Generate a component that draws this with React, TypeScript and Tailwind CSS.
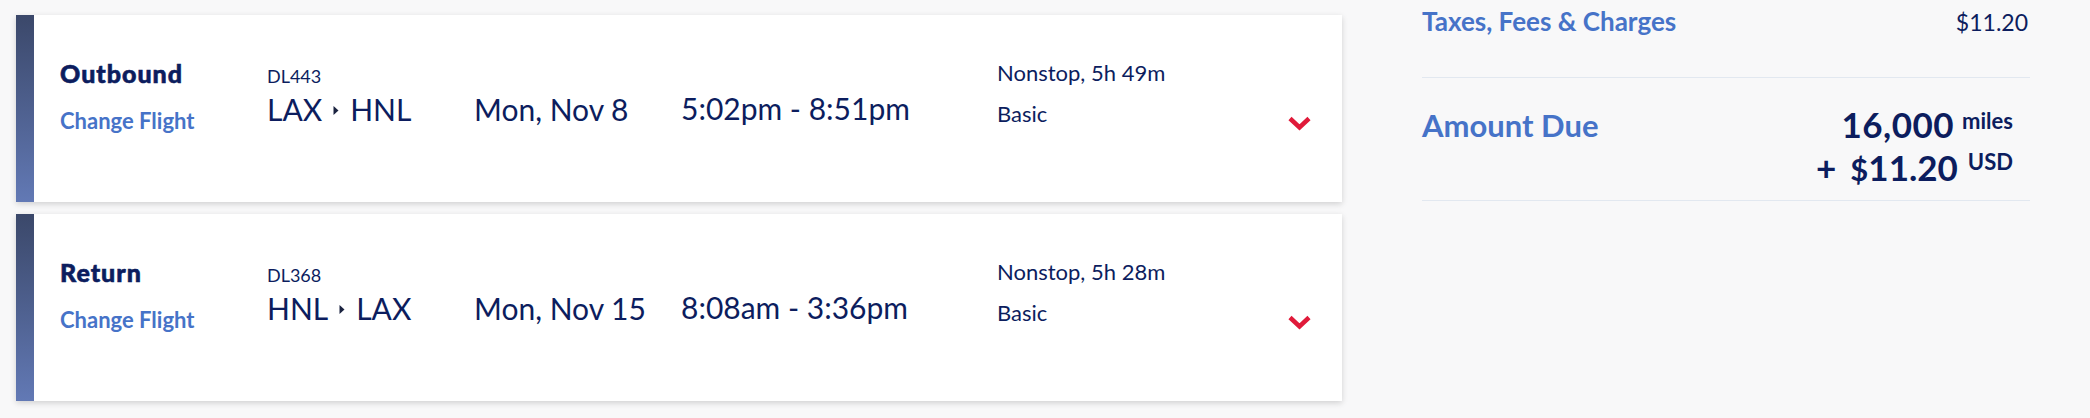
import { FC } from "react";

const FLIGHTS = [
  {
    label: "Outbound",
    number: "DL443",
    from: "LAX",
    to: "HNL",
    date: "Mon, Nov 8",
    time: "5:02pm - 8:51pm",
    duration: "Nonstop, 5h 49m",
    fare: "Basic",
  },
  {
    label: "Return",
    number: "DL368",
    from: "HNL",
    to: "LAX",
    date: "Mon, Nov 15",
    time: "8:08am - 3:36pm",
    duration: "Nonstop, 5h 28m",
    fare: "Basic",
  },
];

const Chevron = () => (
  <svg width="23" height="15" viewBox="0 0 23 15" className="block">
    <path d="M2 2.5 L11.5 11.5 L21 2.5" fill="none" stroke="#e01a3a" strokeWidth="4.5" />
  </svg>
);

const Arrow = () => (
  <svg width="6" height="9" viewBox="0 0 6 9" className="inline-block mx-[11px] mb-[5px] align-middle">
    <path d="M0.5 0 L5.5 4.5 L0.5 9 Z" fill="#1b2340" />
  </svg>
);

type Flight = (typeof FLIGHTS)[number];

const FlightCard: FC<{ flight: Flight }> = ({ flight }) => {
  return (
    <div className="flex h-[187px] bg-white shadow-[0_2px_6px_rgba(0,0,0,0.16)]">
      <div className="w-[18px] shrink-0 bg-gradient-to-b from-[#3b486a] to-[#6279b5]" />
      <div className="flex items-start pl-[26px] text-[#0c1d5e]">
        <div className="w-[207px] pt-[44px]">
          <div className="text-[25px] leading-[29px] font-black tracking-[1px] [-webkit-text-stroke:0.6px_#0c1d5e]">
            {flight.label}
          </div>
          <div className="mt-[20px] text-[22px] leading-[26px] font-bold text-[#4673c8]">
            Change Flight
          </div>
        </div>
        <div className="w-[207px] pt-[50px]">
          <div className="text-[18px] leading-[22px]">{flight.number}</div>
          <div className="mt-[4px] text-[30px] leading-[36px] whitespace-nowrap">
            {flight.from}
            <Arrow />
            {flight.to}
          </div>
        </div>
        <div className="w-[207px] pt-[76px] text-[30px] leading-[36px] whitespace-nowrap">
          {flight.date}
        </div>
        <div className="w-[316px] pt-[75px] text-[30px] leading-[36px] whitespace-nowrap">
          {flight.time}
        </div>
        <div className="w-[291px] pt-[45px]">
          <div className="text-[22px] leading-[26px]">{flight.duration}</div>
          <div className="mt-[15px] text-[22px] leading-[26px]">{flight.fare}</div>
        </div>
        <div className="pt-[101px]">
          <Chevron />
        </div>
      </div>
    </div>
  );
};

export default function App() {
  return (
    <div className="w-[2090px] h-[418px] overflow-hidden bg-[#f8f8f9] flex font-['Lato',sans-serif]">
      <div className="w-[1326px] ml-[16px] pt-[15px] flex flex-col gap-[12px]">
        {FLIGHTS.map((f) => (
          <FlightCard key={f.number} flight={f} />
        ))}
      </div>
      <div className="ml-[80px] w-[608px] text-[#0c1d5e]">
        <div className="flex justify-between pt-[6px] h-[78px] border-b border-[#e2e8f0] pr-[2px]">
          <div className="text-[26px] leading-[30px] font-bold text-[#4673c8]">
            Taxes, Fees &amp; Charges
          </div>
          <div className="text-[23px] leading-[29px] pt-[2px]">$11.20</div>
        </div>
        <div className="flex justify-between h-[123px] border-b border-[#e2e8f0] pr-[17px]">
          <div className="pt-[29px] text-[31px] leading-[36px] font-bold text-[#4673c8]">
            Amount Due
          </div>
          <div className="pt-[25px] text-right font-bold">
            <div className="text-[35px] leading-[43px] whitespace-nowrap tracking-[0.5px]">
              16,000
              <span className="ml-[8px] text-[22px] leading-[20px] tracking-normal align-[9px]">miles</span>
            </div>
            <div className="text-[35px] leading-[43px] whitespace-nowrap">
              <span className="mr-[14px]">+</span>
              <span className="text-[31px]">$</span>11.20
              <span className="ml-[10px] text-[22px] leading-[20px] align-[11px]">USD</span>
            </div>
          </div>
        </div>
      </div>
    </div>
  );
}
